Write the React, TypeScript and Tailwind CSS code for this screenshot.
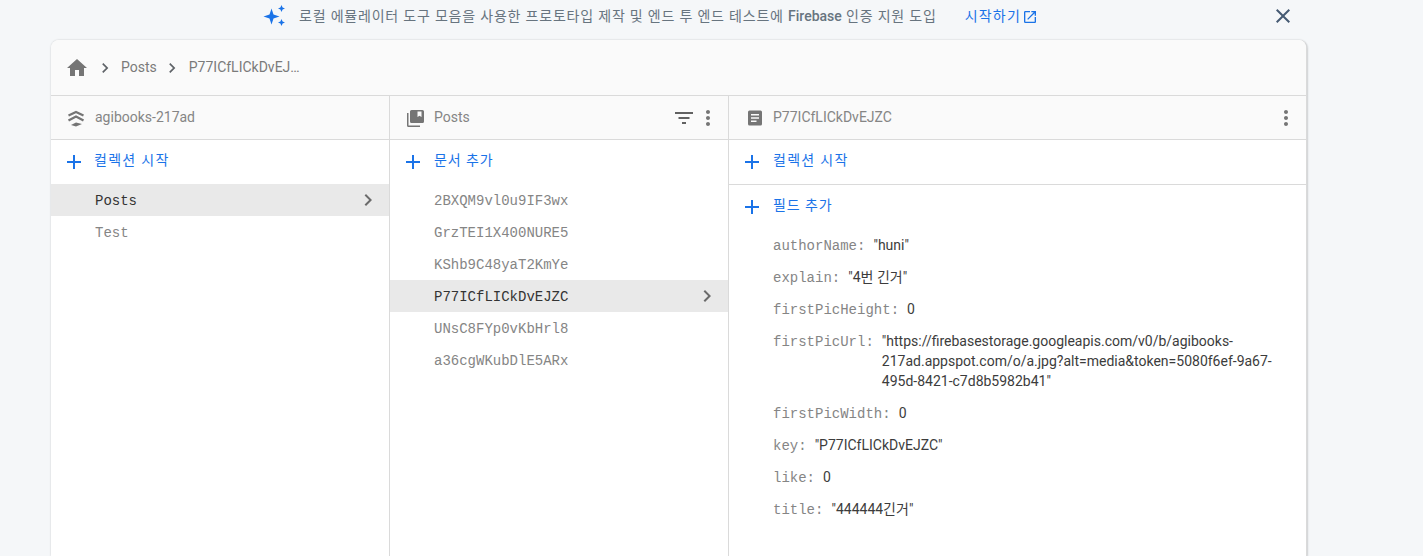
import React from "react";

const mono = "font-['Liberation_Mono',monospace]";
const sans = "font-['Roboto','Noto_Sans_CJK_KR',sans-serif]";

function Plus() {
  return (
    <svg width="24" height="24" viewBox="0 0 24 24" className="shrink-0" fill="#1a73e8">
      <path d="M19 13h-6v6h-2v-6H5v-2h6V5h2v6h6v2z" />
    </svg>
  );
}

function Chevron({ color = "#5f6368", size = 24 }: { color?: string; size?: number }) {
  return (
    <svg width={size} height={size} viewBox="0 0 24 24" fill={color} className="shrink-0">
      <path d="M10 6 8.590 7.410 13.170 12l-4.580 4.590L10 18l6-6z" />
    </svg>
  );
}

function Dots() {
  return (
    <svg width="24" height="24" viewBox="0 0 24 24" fill="#757575" className="shrink-0">
      <path d="M12 8c1.100 0 2-.9 2-2s-.9-2-2-2-2 .9-2 2 .9 2 2 2zm0 2c-1.100 0-2 .9-2 2s.9 2 2 2 2-.9 2-2-.9-2-2-2zm0 6c-1.100 0-2 .9-2 2s.9 2 2 2 2-.9 2-2-.9-2-2-2z" />
    </svg>
  );
}

function AddRow({ label, track, h = "h-11" }: { label: string; track: string; h?: string }) {
  return (
    <div className={`flex ${h} items-center gap-[8px] pl-[11px]`}>
      <Plus />
      <span className={`mb-[3px] text-[14px] text-[#1a73e8] ${track}`}>{label}</span>
    </div>
  );
}

function Header({ icon, title, right }: { icon: React.ReactNode; title: string; right?: React.ReactNode }) {
  return (
    <div className="flex h-11 shrink-0 items-center border-b border-[#dadada] bg-[#fafafa] pl-[14px] pr-[8px]">
      <div className="flex w-[30px] shrink-0 items-center">{icon}</div>
      <span className="text-[14px] text-[#858585]">{title}</span>
      <div className="ml-auto flex items-center">{right}</div>
    </div>
  );
}

function ListRow({ label, active }: { label: string; active?: boolean }) {
  return (
    <div
      className={`flex h-8 items-center pl-11 pr-[9px] ${mono} text-[14px] ${
        active ? "bg-[#e9e9e9] text-[#333333]" : "text-[#858585]"
      }`}
    >
      <span className="pt-[2px]">{label}</span>
      {active && (
        <span className="ml-auto">
          <Chevron color="#6b6b6b" />
        </span>
      )}
    </div>
  );
}

function Field({ name, value }: { name: string; value: string }) {
  return (
    <div className="flex pb-[6px] pt-[5px] text-[14px] leading-5">
      <span className={`${mono} mr-[8px] mt-[1px] shrink-0 text-[#858585]`}>{name}:</span>
      <span className="mb-[1px] text-[#3c3c3c]">{value}</span>
    </div>
  );
}

export default function App() {
  return (
    <div className={`h-[556px] w-[1423px] overflow-hidden bg-[#f5f7f9] ${sans}`}>
      <div className="flex h-10 items-start">
        <div className="ml-[263px] flex h-8 items-center">
          <svg width="24" height="24" viewBox="0 0 24 24" fill="#1a73e8" className="shrink-0">
            <path d="M8.500 4.500 10.500 10.500 16.500 12.500 10.500 14.500 8.500 20.500 6.500 14.500 .5 12.500 6.500 10.500z" />
            <path d="M18.500 1 19.600 3.400 22 4.500 19.600 5.600 18.500 8 17.400 5.600 15 4.500 17.400 3.400z" />
            <path d="M18.500 15 19.600 17.400 22 18.500 19.600 19.600 18.500 22 17.400 19.600 15 18.500 17.400 17.400z" />
          </svg>
          <span className="ml-[12px] text-[14px] tracking-[0.8px] text-[#67747f]">
            로컬 에뮬레이터 도구 모음을 사용한 프로토타입 제작 및 엔드 투 엔드 테스트에{" "}
            <span className="font-medium tracking-normal">Firebase</span> 인증 지원 도입
          </span>
          <span className="ml-[28px] text-[14px] tracking-[1.2px] text-[#1a73e8]">시작하기</span>
          <svg width="16" height="16" viewBox="0 0 24 24" fill="#1a73e8" className="ml-[1px] mt-[1px] shrink-0">
            <path d="M19 19H5V5h7V3H5a2 2 0 0 0-2 2v14a2 2 0 0 0 2 2h14c1.100 0 2-.9 2-2v-7h-2v7zM14 3v2h3.590l-9.830 9.830 1.410 1.410L19 6.410V10h2V3h-7z" />
          </svg>
        </div>
        <svg width="24" height="24" viewBox="0 0 24 24" fill="#455a73" className="ml-auto mr-[128px] mt-[4px] shrink-0">
          <path d="M19 6.410 17.590 5 12 10.590 6.410 5 5 6.410 10.590 12 5 17.590 6.410 19 12 13.410 17.590 19 19 17.590 13.410 12z" />
        </svg>
      </div>

      <div className="ml-[51px] flex h-[516px] w-[1256px] flex-col overflow-hidden rounded-t-[8px] border-r border-[#dadada] bg-white shadow-[0_0_2px_rgba(0,0,0,0.2),1px_1px_2px_rgba(0,0,0,0.1)]">
        <div className="flex h-14 shrink-0 items-center border-b border-[#dadada] bg-[#fafafa] pl-[14px] text-[14px] text-[#7a7a7a]">
          <svg width="24" height="24" viewBox="0 0 24 24" fill="#757575" className="shrink-0">
            <path d="M10 20v-6h4v6h5v-8h3L12 3 2 12h3v8z" />
          </svg>
          <span className="ml-[6px]">
            <Chevron size={20} />
          </span>
          <span className="ml-[6px]">Posts</span>
          <span className="ml-[5px]">
            <Chevron size={20} />
          </span>
          <span className="ml-[7px]">P77ICfLICkDvEJ…</span>
        </div>

        <div className="flex min-h-0 flex-1">
          <div className="flex w-[339px] shrink-0 flex-col border-r border-[#dadada]">
            <Header
              title="agibooks-217ad"
              icon={
                <svg width="20" height="20" viewBox="0 0 20 20" fill="none" stroke="#757575" strokeWidth="2.200">
                  <path d="M3.500 7.500 11 4l7.500 3.500" />
                  <path d="M3.500 12.500 11 8.500l7.500 4" />
                  <path d="M6 17l5-2.500 6 1.500-6 2.500z" fill="#757575" stroke="none" />
                </svg>
              }
            />
            <AddRow label="컬렉션 시작" track="tracking-[1.3px]" />
            <ListRow label="Posts" active />
            <ListRow label="Test" />
          </div>

          <div className="flex w-[339px] shrink-0 flex-col border-r border-[#dadada]">
            <Header
              title="Posts"
              icon={
                <svg width="20" height="20" viewBox="0 0 20 20" fill="#757575" className="ml-[1px]">
                  <path d="M2 5h1.500v12.500H15V19H3.500A1.500 1.500 0 0 1 2 17.500z" />
                  <path fillRule="evenodd" d="M6.500 2h11A1.500 1.500 0 0 1 19 3.500v10a1.500 1.500 0 0 1-1.500 1.500h-11A1.500 1.500 0 0 1 5 13.500v-10A1.500 1.500 0 0 1 6.500 2zM12.500 3.500V9l2-1.300 2 1.300V3.500z" />
                </svg>
              }
              right={
                <>
                  <svg width="24" height="24" viewBox="0 0 24 24" fill="#616161">
                    <path d="M3 6h18v2H3zM6.500 11h11v2h-11zM10 16h4v2h-4z" />
                  </svg>
                  <Dots />
                </>
              }
            />
            <AddRow label="문서 추가" track="ml-[1px] tracking-[0.9px]" />
            <div>
              <ListRow label="2BXQM9vl0u9IF3wx" />
              <ListRow label="GrzTEI1X400NURE5" />
              <ListRow label="KShb9C48yaT2KmYe" />
              <ListRow label="P77ICfLICkDvEJZC" active />
              <ListRow label="UNsC8FYp0vKbHrl8" />
              <ListRow label="a36cgWKubDlE5ARx" />
            </div>
          </div>

          <div className="flex min-w-0 flex-1 flex-col">
            <Header
              title="P77ICfLICkDvEJZC"
              icon={
                <svg width="20" height="20" viewBox="0 0 20 20" fill="#757575" className="ml-[2px]">
                  <path fillRule="evenodd" d="M4.500 2.500h11A1.500 1.500 0 0 1 17 4v12a1.500 1.500 0 0 1-1.500 1.500h-11A1.500 1.500 0 0 1 3 16V4a1.500 1.500 0 0 1 1.500-1.500zM6 6v1.500h8V6zm0 3.300v1.500h8V9.300zm0 3.200V14h5.500v-1.500z" />
                </svg>
              }
              right={<Dots />}
            />
            <div className="h-[45px] shrink-0 border-b border-[#dadada]">
              <AddRow label="컬렉션 시작" track="ml-[1px] tracking-[1.300px]" />
            </div>
            <AddRow label="필드 추가" track="ml-[1px] tracking-[0.9px]" />
            <div className="pl-11 pr-[30px] pt-[1px]">
              <Field name="authorName" value={'"huni"'} />
              <Field name="explain" value={'"4번 긴거"'} />
              <Field name="firstPicHeight" value="0" />
              <Field
                name="firstPicUrl"
                value={'"https://firebasestorage.googleapis.com/v0/b/agibooks-217ad.appspot.com/o/a.jpg?alt=media&token=5080f6ef-9a67-495d-8421-c7d8b5982b41"'}
              />
              <Field name="firstPicWidth" value="0" />
              <Field name="key" value={'"P77ICfLICkDvEJZC"'} />
              <Field name="like" value="0" />
              <Field name="title" value={'"444444긴거"'} />
            </div>
          </div>
        </div>
      </div>
    </div>
  );
}
